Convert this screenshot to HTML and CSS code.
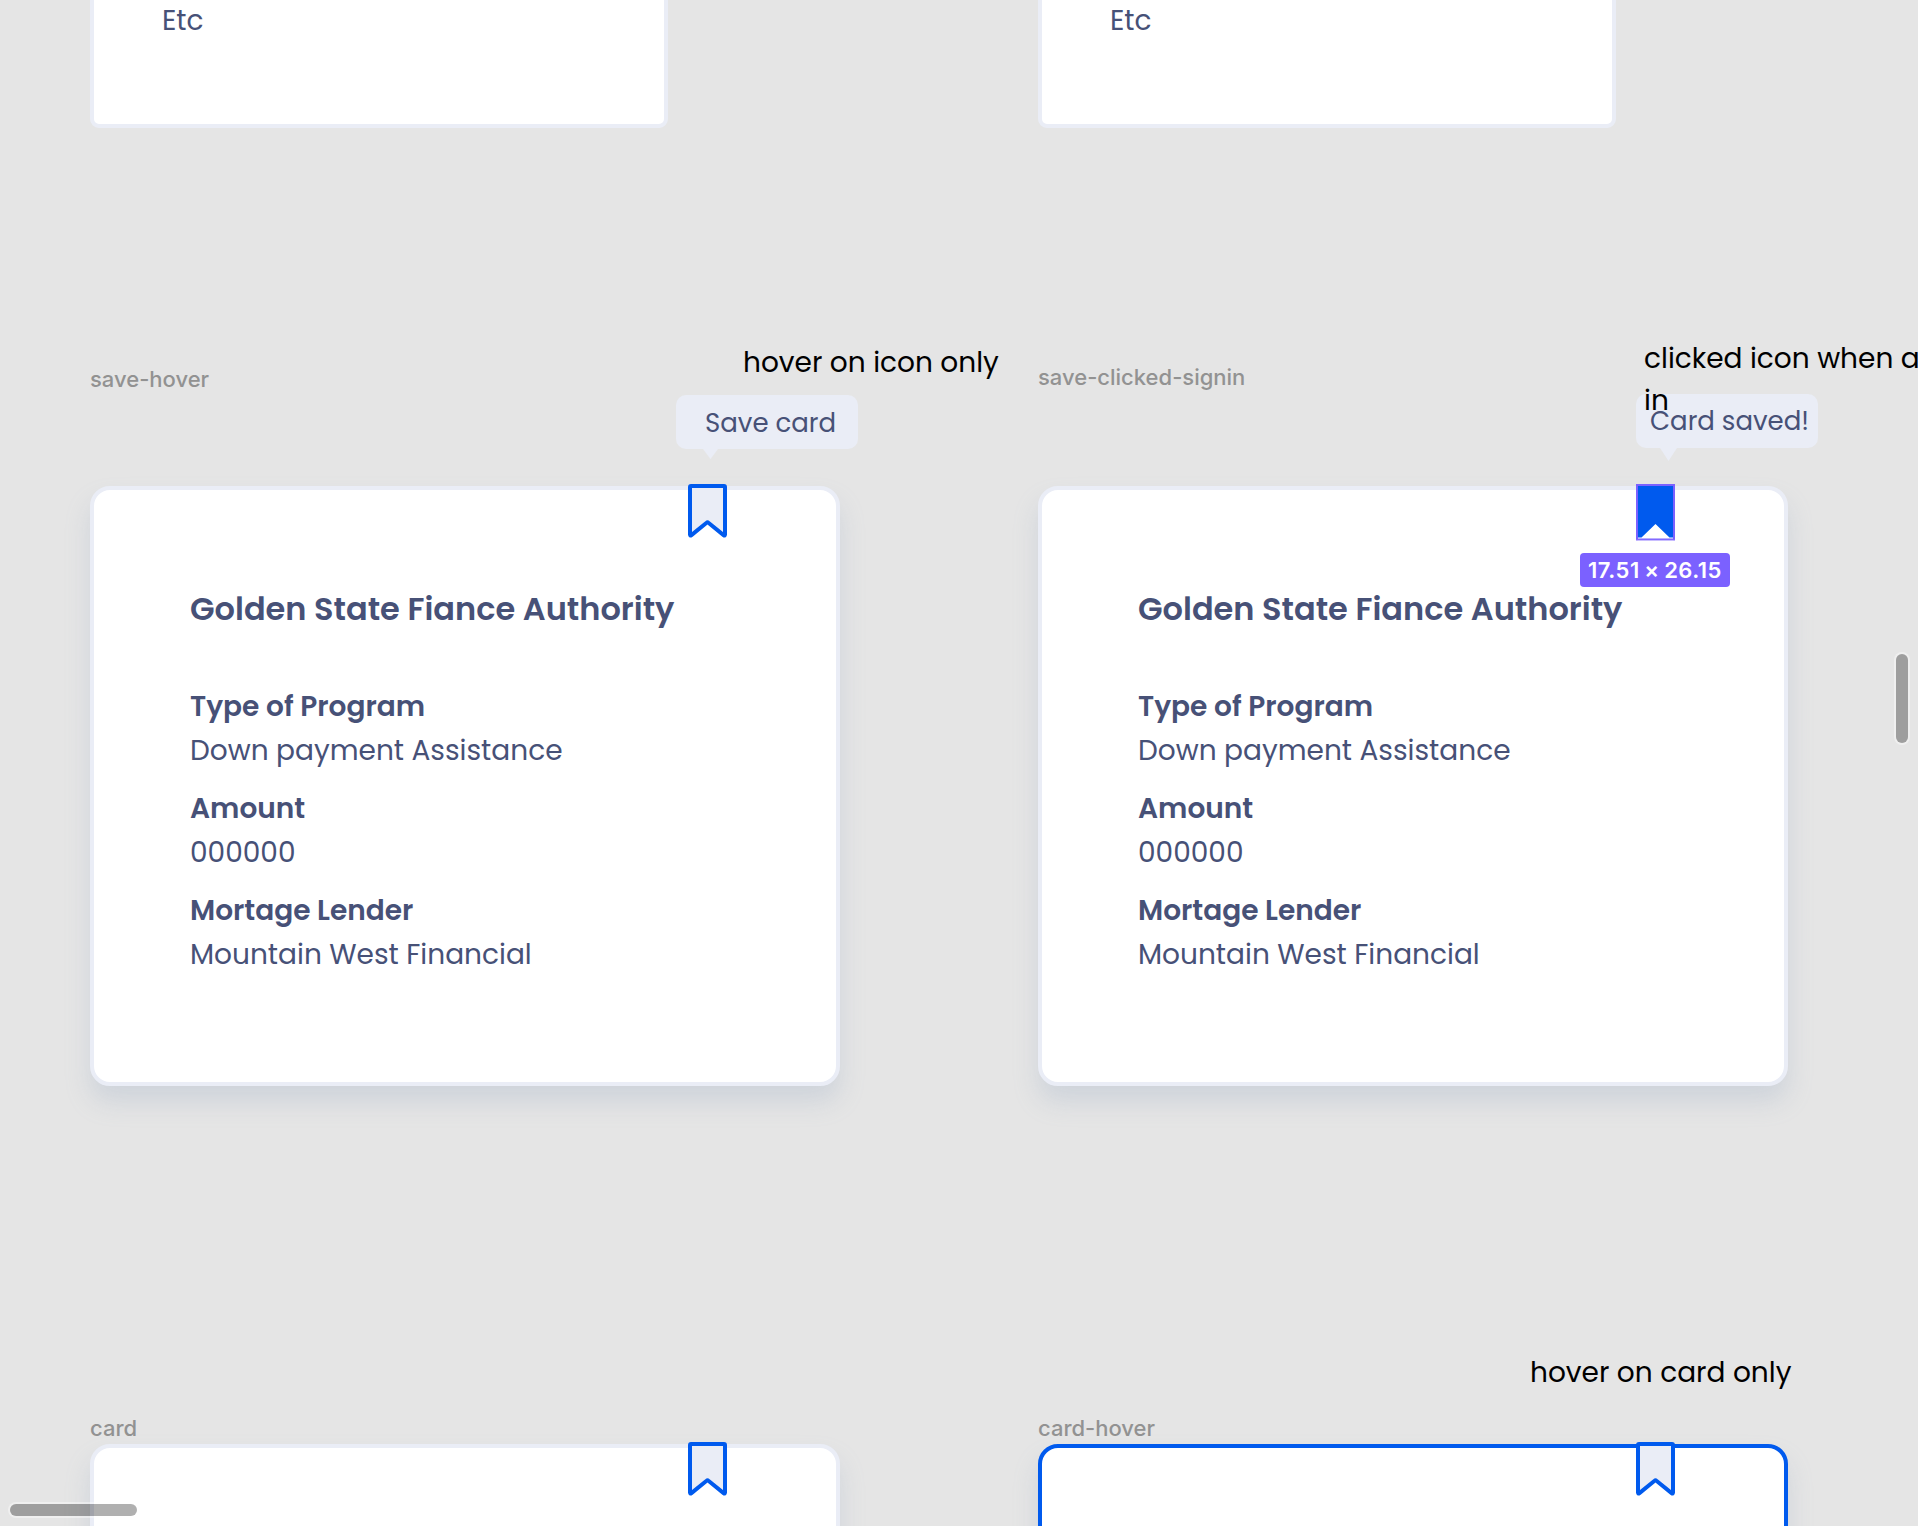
FILE: index.html
```html
<!DOCTYPE html>
<html lang="en">
<head>
<meta charset="utf-8">
<title>Card states</title>
<link rel="stylesheet" href="styles.css">
</head>
<body>
<svg class="defs" width="0" height="0" aria-hidden="true">
  <symbol id="bookmark" viewBox="0 0 39 54">
    <path d="M3 2H36Q37 2 37 3V50.6Q37 52.2 35.6 51.1L20.4 38.8Q19.5 38 18.6 38.8L3.4 51.1Q2 52.2 2 50.6V3Q2 2 3 2Z" fill="#eaedf6" stroke="#005aee" stroke-width="4" stroke-linejoin="round"/>
  </symbol>
</svg>
<main class="canvas">
  <section class="frame list-left"><p class="etc">Etc</p></section>
  <section class="frame list-right"><p class="etc">Etc</p></section>

  <span class="label label-hover">save-hover</span>
  <span class="label label-signin">save-clicked-signin</span>
  <span class="label label-card">card</span>
  <span class="label label-card-hover">card-hover</span>

  <article class="card card-a">
    <svg class="bookmark" width="39" height="54"><use href="#bookmark"/></svg>
    <h2 class="title">Golden State Fiance Authority</h2>
    <dl class="facts">
      <div><dt>Type of Program</dt><dd>Down payment Assistance</dd></div>
      <div><dt>Amount</dt><dd>000000</dd></div>
      <div><dt>Mortage Lender</dt><dd>Mountain West Financial</dd></div>
    </dl>
  </article>

  <article class="card card-b">
    <svg class="bookmark" width="39" height="57" viewBox="0 0 39 57">
      <path d="M1 1H38V53.5H33.5L19.5 40L5.5 53.5H1Z" fill="#005aee"/>
      <path d="M1 56.5V1H38V56.5" fill="none" stroke="#7b61ff" stroke-width="2"/>
      <path d="M1 55.2H38" stroke="#7b61ff" stroke-width="1.4"/>
      <path d="M0 56.4H39" stroke="#c3b7ff" stroke-width="1"/>
    </svg>
    <h2 class="title">Golden State Fiance Authority</h2>
    <dl class="facts">
      <div><dt>Type of Program</dt><dd>Down payment Assistance</dd></div>
      <div><dt>Amount</dt><dd>000000</dd></div>
      <div><dt>Mortage Lender</dt><dd>Mountain West Financial</dd></div>
    </dl>
  </article>

  <article class="card card-c"><svg class="bookmark" width="39" height="54"><use href="#bookmark"/></svg></article>
  <article class="card card-d"><svg class="bookmark" width="39" height="54"><use href="#bookmark"/></svg></article>

  <div class="tooltip tip-save">Save card<svg class="arrow" width="15" height="10" viewBox="0 0 15 10"><path d="M0 0H15L7.5 10Z" fill="#eaedf6"/></svg></div>
  <div class="tooltip tip-saved">Card saved!<svg class="arrow" width="17" height="13" viewBox="0 0 17 13"><path d="M0 0H17L8.5 13Z" fill="#eaedf6"/></svg></div>

  <p class="note note-icon">hover on icon only</p>
  <p class="note note-clicked">clicked icon when a<br>in</p>
  <p class="note note-card">hover on card only</p>

  <span class="size-badge">17.51 × 26.15</span>

  <div class="scroll scroll-y"></div>
  <div class="scroll scroll-x"></div>
</main>
</body>
</html>
```
FILE: styles.css
```css
* { box-sizing: border-box; }

body { margin: 0; background: #e5e5e5; }

.defs { position: absolute; }

p, h2, dl, dd { margin: 0; }

.canvas {
  position: relative;
  width: 1918px;
  height: 1526px;
  overflow: hidden;
  font-family: Poppins, Inter, sans-serif;
  font-size: 28px;
  color: #475177;
  white-space: nowrap;
}

/* frames placed on the canvas */
.frame {
  position: absolute;
  top: -40px;
  width: 578px;
  height: 168px;
  padding: 35px 68px;
  border: 4px solid #eaedf6;
  border-radius: 9px;
  background: #fff;
}
.list-left { left: 90px; }
.list-right { left: 1038px; }

.card {
  position: absolute;
  width: 750px;
  height: 600px;
  padding: 95px 96px;
  border: 4px solid #eaedf6;
  border-radius: 20px;
  background: #fff;
  box-shadow: 0 16px 24px rgba(152, 168, 194, 0.28);
}
.card-a { left: 90px; top: 486px; }
.card-b { left: 1038px; top: 486px; }
.card-c { left: 90px; top: 1444px; }
.card-d { left: 1038px; top: 1444px; border-color: #005aee; }

.bookmark { position: absolute; left: 594px; top: -6px; }

.title {
  margin-bottom: 52px;
  font-size: 32px;
  line-height: 48px;
  font-weight: 600;
}

.facts { display: flex; flex-direction: column; gap: 14px; line-height: 44px; }
dt { font-weight: 600; }
.etc { line-height: 44px; }

/* frame names */
.label {
  position: absolute;
  font: 450 22px/28px Inter, sans-serif;
  color: #929292;
}
.label-hover { left: 90px; top: 365px; }
.label-signin { left: 1038px; top: 363px; }
.label-card { left: 90px; top: 1414px; }
.label-card-hover { left: 1038px; top: 1414px; }

.tooltip {
  position: absolute;
  width: 182px;
  height: 54px;
  border-radius: 10px;
  background: #eaedf6;
  font-size: 26px;
  line-height: 56px;
}
.tip-save { left: 676px; top: 395px; padding-left: 29px; }
.tip-saved { left: 1636px; top: 394px; padding-left: 14px; line-height: 55px; }
.arrow { position: absolute; top: 54px; }
.tip-save .arrow { left: 27px; }
.tip-saved .arrow { left: 24px; }

.note { position: absolute; line-height: 42px; color: #000; }
.note-icon { left: 743px; top: 342px; }
.note-clicked { left: 1644px; top: 338px; }
.note-card { left: 1530px; top: 1352px; }

.size-badge {
  position: absolute;
  left: 1580px;
  top: 553px;
  width: 150px;
  height: 34px;
  border-radius: 4px;
  background: #7b61ff;
  color: #fff;
  font: 600 22px/35px Inter, sans-serif;
  letter-spacing: 0.5px;
  word-spacing: -1.5px;
  text-align: center;
}

.scroll {
  position: absolute;
  border-radius: 8px;
  background: rgba(0, 0, 0, 0.31);
  box-shadow: 0 0 0 2px rgba(255, 255, 255, 0.4);
}
.scroll-y { left: 1896px; top: 654px; width: 12px; height: 89px; }
.scroll-x { left: 10px; top: 1504px; width: 127px; height: 12px; }
```
